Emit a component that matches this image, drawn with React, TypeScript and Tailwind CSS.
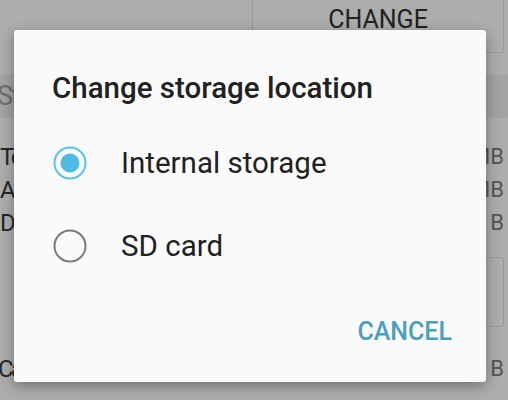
import React from "react";

const rows = [
  { label: "Total", value: "1,240 MB" },
  { label: "Apps", value: "812 MB" },
  { label: "Data", value: "0.00 B" },
];

function Radio({ checked }: { checked: boolean }) {
  return (
    <svg width="34" height="34" viewBox="0 0 34 34">
      <circle
        cx="17"
        cy="17"
        r="15.5"
        fill="none"
        stroke={checked ? "#5bc2e7" : "#7a7a7a"}
        strokeWidth="2"
      />
      {checked ? <circle cx="17" cy="17" r="9.5" fill="#4fbbe5" /> : null}
    </svg>
  );
}

export default function App() {
  return (
    <div
      className="relative w-[508px] h-[400px] overflow-hidden bg-[#adadad]"
      style={{ fontFamily: "Roboto, 'Liberation Sans', sans-serif" }}
    >
      {/* page behind the dialog */}
      <div className="flex justify-end pr-[4px]">
        <div className="w-[252px] h-[53px] border border-t-0 border-[#999] rounded-b-[3px] flex items-start justify-center pt-[7px] text-[25px] leading-none text-[#222]">
          CHANGE
        </div>
      </div>
      <div className="mt-[22px] h-[43px] bg-[#a3a3a3] flex items-center text-[27px] text-[#6f6f6f] tracking-[-2px]">
        <span className="-ml-[3px]">Storage</span>
      </div>
      <div className="pt-[22px] flex flex-col">
        {rows.map((r) => (
          <div key={r.label} className="h-[33px] flex items-center justify-between pr-[4px]">
            <span className="text-[24px] tracking-[-2.5px] text-[#262626]">{r.label}</span>
            <span className="text-[22px] text-[#555]">{r.value}</span>
          </div>
        ))}
      </div>
      <div className="flex justify-end pr-[4px] mt-[18px]">
        <div className="w-[60px] h-[70px] border border-[#999] rounded-[3px]" />
      </div>
      <div className="mt-[25px] h-[33px] flex items-center justify-between pr-[4px]">
        <span className="text-[24px] tracking-[-2.5px] text-[#262626] -ml-[2px]">Cache</span>
        <span className="text-[22px] text-[#555]">0.00 B</span>
      </div>

      {/* dialog */}
      <div className="absolute left-[14px] top-[30px] w-[472px] h-[352px] bg-[#fafafa] rounded-[3px] shadow-[0_4px_14px_rgba(0,0,0,0.35)] flex flex-col">
        <div className="pl-[38px] pt-[44px] text-[29.5px] font-medium text-[#212121] leading-none">
          Change storage location
        </div>
        <div className="mt-[18px] flex flex-col">
          <div className="h-[83px] flex items-center pl-[39px]">
            <Radio checked />
            <span className="ml-[34px] text-[29.5px] text-[#212121]">Internal storage</span>
          </div>
          <div className="h-[83px] flex items-center pl-[39px]">
            <Radio checked={false} />
            <span className="ml-[34px] text-[29.5px] text-[#212121]">SD card</span>
          </div>
        </div>
        <div className="flex justify-end pr-[34px] mt-[31px]">
          <span className="text-[25px] leading-none font-medium text-[#4a9fc0]">CANCEL</span>
        </div>
      </div>
    </div>
  );
}
